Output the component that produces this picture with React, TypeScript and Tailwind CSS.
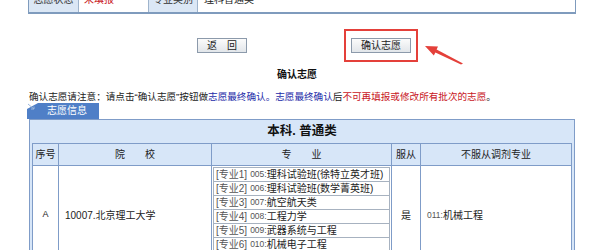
import { FC } from "react";

type Major = {
  no: number;
  code: string;
  name: string;
};

const majors: Major[] = [
  { no: 1, code: "005", name: "理科试验班(徐特立英才班)" },
  { no: 2, code: "006", name: "理科试验班(数学菁英班)" },
  { no: 3, code: "007", name: "航空航天类" },
  { no: 4, code: "008", name: "工程力学" },
  { no: 5, code: "009", name: "武器系统与工程" },
  { no: 6, code: "010", name: "机械电子工程" },
];

const font = {
  fontFamily: '"Liberation Sans", "Noto Sans CJK SC", sans-serif',
};

const App: FC = () => {
  return (
    <div
      className="relative w-[594px] h-[250px] overflow-hidden bg-white text-[#222]"
      style={font}
    >
      {/* 上方状态行 (被截掉一半) */}
      <div className="mt-[-13px] ml-[28px] w-[548px] h-[27px] flex border border-[#7f9bbd] border-b-2 text-[10px] leading-none">
        <div className="w-[50px] flex items-center justify-center bg-[#dbe7f5] border-r border-[#9fb4cc] text-[#333]">
          志愿状态
        </div>
        <div className="w-[70px] flex items-center pl-[5px] text-[#c8161d] border-r border-[#9fb4cc]">
          未填报
        </div>
        <div className="w-[49px] flex items-center justify-center bg-[#dbe7f5] border-r border-[#9fb4cc] text-[#333]">
          专业类别
        </div>
        <div className="flex-1 flex items-center pl-[6px]">理科普通类</div>
      </div>

      {/* 按钮 */}
      <div className="mt-[15px] flex items-center">
        <button className="ml-[197px] w-[50px] h-[15px] border border-[#8c9aab] bg-gradient-to-b from-[#fbfbfb] to-[#e2e6ea] text-[10px] leading-none text-[#222] flex items-center justify-center gap-[10px]">
          <span>返</span>
          <span>回</span>
        </button>
        <div className="ml-[97px] w-[74px] h-[33px] border-2 border-[#e4403a] flex items-center pl-[5px]">
          <button className="w-[60px] h-[15px] border border-[#8c9aab] bg-gradient-to-b from-[#fbfbfb] to-[#e2e6ea] text-[10px] leading-none text-[#222]">
            确认志愿
          </button>
        </div>
      </div>

      <svg
        className="absolute left-[420px] top-[38px]"
        width="50"
        height="32"
        viewBox="0 0 50 32"
      >
        <polygon
          points="5,8 18,8.4 16.6,11.4 43,25.5 41,26.5 15.4,14.6 13.8,17.6"
          fill="#e4403a"
        />
      </svg>

      <div className="mt-[6px] text-center text-[10px] font-bold leading-[14px] text-[#111]">
        确认志愿
      </div>

      <div className="mt-[8px] ml-[29px] text-[9.6px] leading-[13px] whitespace-nowrap text-[#222]">
        确认志愿请注意：请点击“确认志愿”按钮做
        <span className="text-[#1c2aa8]">志愿最终确认。志愿最终确认</span>
        后<span className="text-[#c8161d]">不可再填报或修改所有批次的志愿</span>。
      </div>

      {/* 标签页 */}
      <div className="relative ml-[27px] mt-[0px] w-[72px] h-[16px]">
        <div className="absolute inset-0 bg-[#4f7fc7] [clip-path:polygon(11px_0,100%_0,100%_100%,0_100%,0_6px)]" />
        <svg className="absolute left-0 top-0" width="10" height="8" viewBox="0 0 10 8">
          <path d="M1 1 L7 6" stroke="#9db7da" strokeWidth="1" />
          <path d="M7 6 L4 6 M7 6 L7 3.5" stroke="#9db7da" strokeWidth="1" />
        </svg>
        <div className="relative h-full flex items-center pl-[20px] text-[10px] leading-none text-white">
          志愿信息
        </div>
      </div>

      {/* 面板 */}
      <div className="ml-[29px] w-[546px] border border-[#7f9cc8] bg-[#d7e6f8] pb-[1px]">
        <div className="h-[23px] flex items-center justify-center text-[12.5px] font-bold text-[#111]">
          本科. 普通类
        </div>
        <div className="mx-[2px] border border-[#7f9cc8] bg-white">
          <div className="flex h-[22px] bg-[#d7e6f8] text-[10px] text-[#222] border-b border-[#7f9cc8]">
            <div className="w-[26px] flex items-center justify-center border-r border-[#7f9cc8]">
              序号
            </div>
            <div className="w-[153px] flex items-center justify-center gap-[20px] border-r border-[#7f9cc8]">
              <span>院</span>
              <span>校</span>
            </div>
            <div className="w-[180px] flex items-center justify-center gap-[20px] border-r border-[#7f9cc8]">
              <span>专</span>
              <span>业</span>
            </div>
            <div className="w-[29px] flex items-center justify-center border-r border-[#7f9cc8]">
              服从
            </div>
            <div className="flex-1 flex items-center justify-center">
              不服从调剂专业
            </div>
          </div>
          <div className="flex text-[10px] text-[#222] h-[98px]">
            <div className="w-[26px] flex items-center justify-center border-r border-[#7f9cc8] text-[9px]">
              A
            </div>
            <div className="w-[153px] flex items-center pl-[6px] border-r border-[#7f9cc8]">
              10007.北京理工大学
            </div>
            <div className="w-[180px] pt-[1px] px-[1px] border-r border-[#7f9cc8]">
              {majors.map((m) => (
                <div
                  key={m.no}
                  className="h-[15px] flex items-center pl-[2px] border border-[#a7b2c0] -mt-px first:mt-0 whitespace-nowrap leading-none"
                >
                  <span className="text-[#555]">[专业{m.no}]</span>
                  <span className="ml-[3px] text-[#555] text-[8.5px]">
                    {m.code}:
                  </span>
                  <span>{m.name}</span>
                </div>
              ))}
            </div>
            <div className="w-[29px] flex items-center justify-center border-r border-[#7f9cc8]">
              是
            </div>
            <div className="flex-1 flex items-center pl-[6px]">
              <span className="text-[#555] text-[8.5px]">011:</span>
              <span>机械工程</span>
            </div>
          </div>
        </div>
      </div>
    </div>
  );
};

export default App;
